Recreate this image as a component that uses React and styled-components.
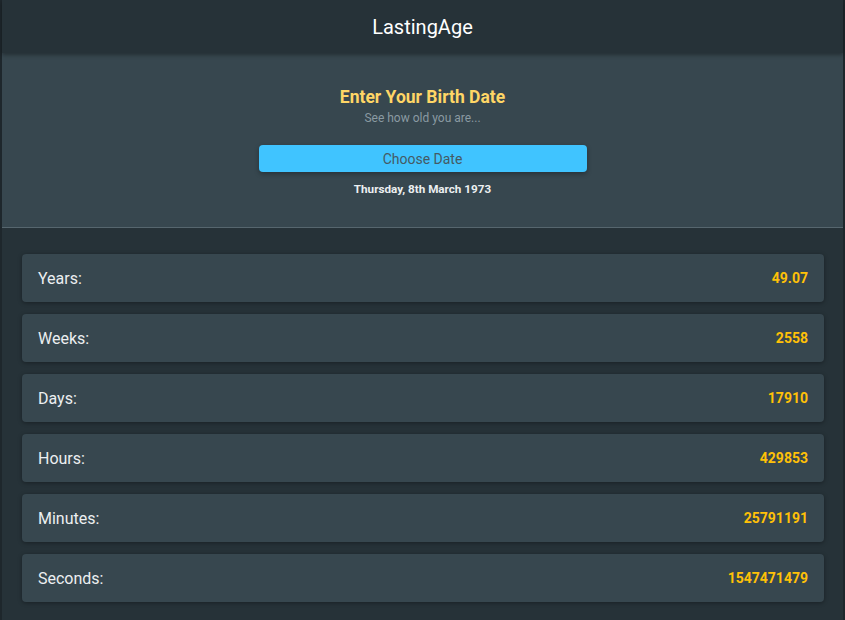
import styled, { createGlobalStyle } from "styled-components";

const GlobalStyle = createGlobalStyle`
  html, body {
    margin: 0;
    padding: 0;
    background: #263238;
    font-family: Roboto, "Noto Sans", Arial, sans-serif;
  }
`;

const stats = [
  { label: "Years:", value: "49.07" },
  { label: "Weeks:", value: "2558" },
  { label: "Days:", value: "17910" },
  { label: "Hours:", value: "429853" },
  { label: "Minutes:", value: "25791191" },
  { label: "Seconds:", value: "1547471479" },
];

export default function App() {
  return (
    <>
      <GlobalStyle />
      <Page>
        <Header>LastingAge</Header>
        <Hero>
          <HeroTitle>Enter Your Birth Date</HeroTitle>
          <HeroSub>See how old you are...</HeroSub>
          <ChooseButton>Choose Date</ChooseButton>
          <DateText>Thursday, 8th March 1973</DateText>
        </Hero>
        <List>
          {stats.map((s) => (
            <Card key={s.label}>
              <Label>{s.label}</Label>
              <Value>{s.value}</Value>
            </Card>
          ))}
        </List>
      </Page>
    </>
  );
}

const Page = styled.div`
  min-height: 620px;
  box-sizing: border-box;
  border-left: 2px solid #1e272c;
  border-right: 2px solid #1e272c;
  background: #263238;
`;

const Header = styled.header`
  height: 53px;
  display: flex;
  align-items: center;
  justify-content: center;
  background: #263238;
  color: #ffffff;
  font-size: 20px;
  position: relative;
  z-index: 1;
  box-shadow: 0 2px 4px rgba(0, 0, 0, 0.35);
`;

const Hero = styled.section`
  background: #37474f;
  border-bottom: 1px solid #56666e;
  display: flex;
  flex-direction: column;
  align-items: center;
  padding: 32px 0 0;
  height: 175px;
  box-sizing: border-box;
`;

const HeroTitle = styled.h2`
  margin: 0;
  color: #ffd666;
  font-size: 17.5px;
  font-weight: 700;
  line-height: 24px;
`;

const HeroSub = styled.div`
  color: #8a9aa2;
  font-size: 12px;
  line-height: 16px;
  margin-top: 1px;
`;

const ChooseButton = styled.button`
  margin-top: 19px;
  width: 328px;
  height: 27px;
  border: none;
  border-radius: 4px;
  background: #40c4ff;
  color: #455a64;
  font-family: inherit;
  font-size: 14px;
  box-shadow: 0 2px 5px rgba(0, 0, 0, 0.3);
  cursor: pointer;
`;

const DateText = styled.div`
  margin-top: 9px;
  color: #eceff1;
  font-size: 11.7px;
  font-weight: 700;
  line-height: 16px;
`;

const List = styled.div`
  display: flex;
  flex-direction: column;
  gap: 12px;
  padding: 26px 19px 16px 20px;
`;

const Card = styled.div`
  height: 48px;
  display: flex;
  align-items: center;
  justify-content: space-between;
  padding: 0 16px;
  background: #37474f;
  border-radius: 4px;
  box-shadow: 0 1px 4px rgba(0, 0, 0, 0.35);
`;

const Label = styled.span`
  color: #eceff1;
  font-size: 16px;
`;

const Value = styled.span`
  color: #ffc107;
  font-size: 14px;
  font-weight: 700;
`;
